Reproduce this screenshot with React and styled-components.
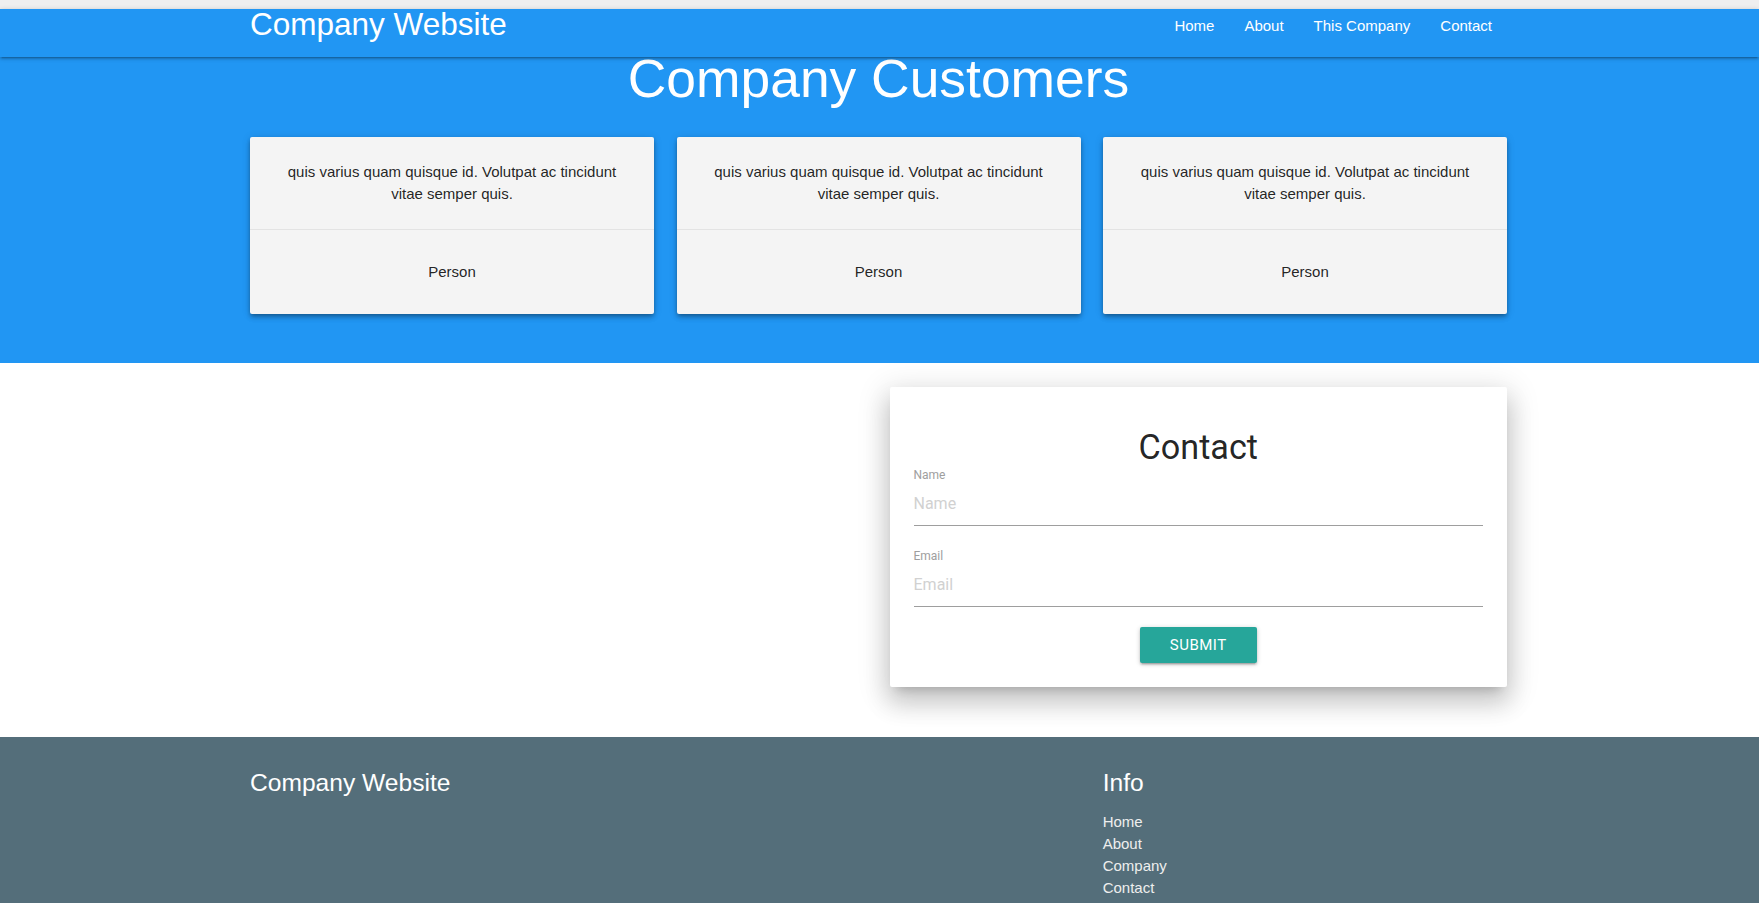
import styled, { createGlobalStyle } from "styled-components"

const GlobalStyle = createGlobalStyle`
    * {
        box-sizing: border-box;
    }

    body {
        margin: 0;
        background: #efefef;
        font-family: 'Liberation Sans', Arial, sans-serif;
    }
`

const customers = [
    { text: "quis varius quam quisque id. Volutpat ac tincidunt vitae semper quis.", name: "Person" },
    { text: "quis varius quam quisque id. Volutpat ac tincidunt vitae semper quis.", name: "Person" },
    { text: "quis varius quam quisque id. Volutpat ac tincidunt vitae semper quis.", name: "Person" },
]

const navLinks = ["Home", "About", "This Company", "Contact"]
const footerLinks = ["Home", "About", "Company", "Contact"]

function App() {
    return (
        <PAGE>
            <GlobalStyle />

            <NAV>
                <CONTAINER className="nav__wrapper">
                    <a className="nav__logo" href="#">Company Website</a>
                    <ul className="nav__links">
                        {navLinks.map((link) => (
                            <li key={link}><a href="#">{link}</a></li>
                        ))}
                    </ul>
                </CONTAINER>
            </NAV>

            <HERO>
                <CONTAINER>
                    <h2 className="hero__title">Company Customers</h2>
                    <div className="hero__cards">
                        {customers.map((item, i) => (
                            <CUSTOMER_CARD key={i}>
                                <div className="card__content">
                                    <p>{item.text}</p>
                                </div>
                                <div className="card__action">
                                    <p>{item.name}</p>
                                </div>
                            </CUSTOMER_CARD>
                        ))}
                    </div>
                </CONTAINER>
            </HERO>

            <CONTACT_SECTION>
                <CONTAINER className="contact__grid">
                    <div />
                    <CONTACT_CARD>
                        <h4>Contact</h4>
                        <FIELD>
                            <label>Name</label>
                            <input type="text" placeholder="Name" />
                        </FIELD>
                        <FIELD>
                            <label>Email</label>
                            <input type="email" placeholder="Email" />
                        </FIELD>
                        <div className="form__actions">
                            <SUBMIT type="button">Submit</SUBMIT>
                        </div>
                    </CONTACT_CARD>
                </CONTAINER>
            </CONTACT_SECTION>

            <FOOTER>
                <CONTAINER className="footer__grid">
                    <div className="footer__about">
                        <h5>Company Website</h5>
                    </div>
                    <div className="footer__info">
                        <h5>Info</h5>
                        <ul>
                            {footerLinks.map((link) => (
                                <li key={link}><a href="#">{link}</a></li>
                            ))}
                        </ul>
                    </div>
                </CONTAINER>
            </FOOTER>
        </PAGE>
    )
}

export default App

const PAGE = styled.div`
    padding-top: 9px;
`

const CONTAINER = styled.div`
    width: 1259px;
    margin: 0 auto;
    padding-right: 2px;
`

const NAV = styled.nav`
    height: 48px;
    background: #2196F3;
    position: relative;
    z-index: 2;
    box-shadow: 0 2px 2px 0 rgba(0, 0, 0, 0.14), 0 3px 1px -2px rgba(0, 0, 0, 0.12), 0 1px 5px 0 rgba(0, 0, 0, 0.2);

    .nav__wrapper {
        display: flex;
        align-items: flex-start;
        justify-content: space-between;
    }

    .nav__logo {
        color: #FFFFFF;
        font-size: 31.5px;
        line-height: 30px;
        text-decoration: none;
    }

    .nav__links {
        display: flex;
        margin: 0;
        padding: 0;
        list-style: none;
    }

    .nav__links a {
        display: block;
        padding: 0 15px;
        color: #FFFFFF;
        font-size: 15px;
        line-height: 33px;
        text-decoration: none;
    }
`

const HERO = styled.section`
    background: #2196F3;
    padding-bottom: 49px;

    .hero__title {
        margin: -7px 0 28px;
        color: #FFFFFF;
        font-size: 53.4px;
        font-weight: 400;
        line-height: 1.1;
        text-align: center;
    }

    .hero__cards {
        display: grid;
        grid-template-columns: repeat(3, 1fr);
        gap: 22.5px;
    }
`

const CUSTOMER_CARD = styled.div`
    background: #F4F4F4;
    border-radius: 2px;
    box-shadow: 0 4px 5px 0 rgba(0, 0, 0, 0.14), 0 1px 10px 0 rgba(0, 0, 0, 0.12), 0 2px 4px -1px rgba(0, 0, 0, 0.3);

    p {
        margin: 0;
        color: rgba(0, 0, 0, 0.87);
        font-size: 15px;
        line-height: 22px;
        text-align: center;
    }

    .card__content {
        padding: 24px;
    }

    .card__action {
        padding: 31px 24px 31px;
        border-top: 1px solid rgba(160, 160, 160, 0.2);
    }
`

const CONTACT_SECTION = styled.section`
    background: #FFFFFF;
    padding: 24px 0 50px;

    .contact__grid {
        display: grid;
        grid-template-columns: 1fr 1fr;
        gap: 22px;
    }
`

const CONTACT_CARD = styled.form`
    padding: 24px;
    background: #FFFFFF;
    border-radius: 2px;
    box-shadow: 0 16px 24px 2px rgba(0, 0, 0, 0.14), 0 6px 30px 5px rgba(0, 0, 0, 0.12), 0 8px 10px -7px rgba(0, 0, 0, 0.2);
    font-family: 'Roboto', 'Liberation Sans', sans-serif;

    h4 {
        margin: 18px 0 3px;
        color: rgba(0, 0, 0, 0.87);
        font-size: 34.2px;
        font-weight: 400;
        line-height: 1.1;
        text-align: center;
    }

    .form__actions {
        display: flex;
        justify-content: center;
        margin-top: 20px;
    }
`

const FIELD = styled.div`
    display: flex;
    flex-direction: column;

    & + & {
        margin-top: 24px;
    }

    label {
        color: #9E9E9E;
        font-size: 12px;
        line-height: 13px;
    }

    input {
        height: 44px;
        margin: 0;
        padding: 0;
        border: none;
        border-bottom: 1px solid #9E9E9E;
        outline: none;
        background: transparent;
        color: rgba(0, 0, 0, 0.87);
        font-family: 'Roboto', 'Liberation Sans', sans-serif;
        font-size: 16px;
    }

    input::placeholder {
        color: #D1D1D1;
    }
`

const SUBMIT = styled.button`
    height: 36px;
    padding: 0 30px;
    border: none;
    border-radius: 2px;
    background: #26A69A;
    color: #FFFFFF;
    font-family: 'Roboto', 'Liberation Sans', sans-serif;
    font-size: 15px;
    letter-spacing: 0.5px;
    text-transform: uppercase;
    box-shadow: 0 2px 2px 0 rgba(0, 0, 0, 0.14), 0 3px 1px -2px rgba(0, 0, 0, 0.12), 0 1px 5px 0 rgba(0, 0, 0, 0.2);
`

const FOOTER = styled.footer`
    background: #546E7A;
    padding: 20px 0 24px;

    .footer__grid {
        display: grid;
        grid-template-columns: repeat(12, 1fr);
        column-gap: 22px;
    }

    .footer__about {
        grid-column: 1 / span 6;
    }

    .footer__info {
        grid-column: 9 / span 4;
    }

    h5 {
        margin: 12px 0 15px;
        color: #FFFFFF;
        font-size: 24.6px;
        font-weight: 400;
        line-height: 1.1;
    }

    ul {
        margin: 0;
        padding: 0;
        list-style: none;
    }

    li a {
        color: #EEEEEE;
        font-size: 15px;
        line-height: 22px;
        text-decoration: none;
    }
`
